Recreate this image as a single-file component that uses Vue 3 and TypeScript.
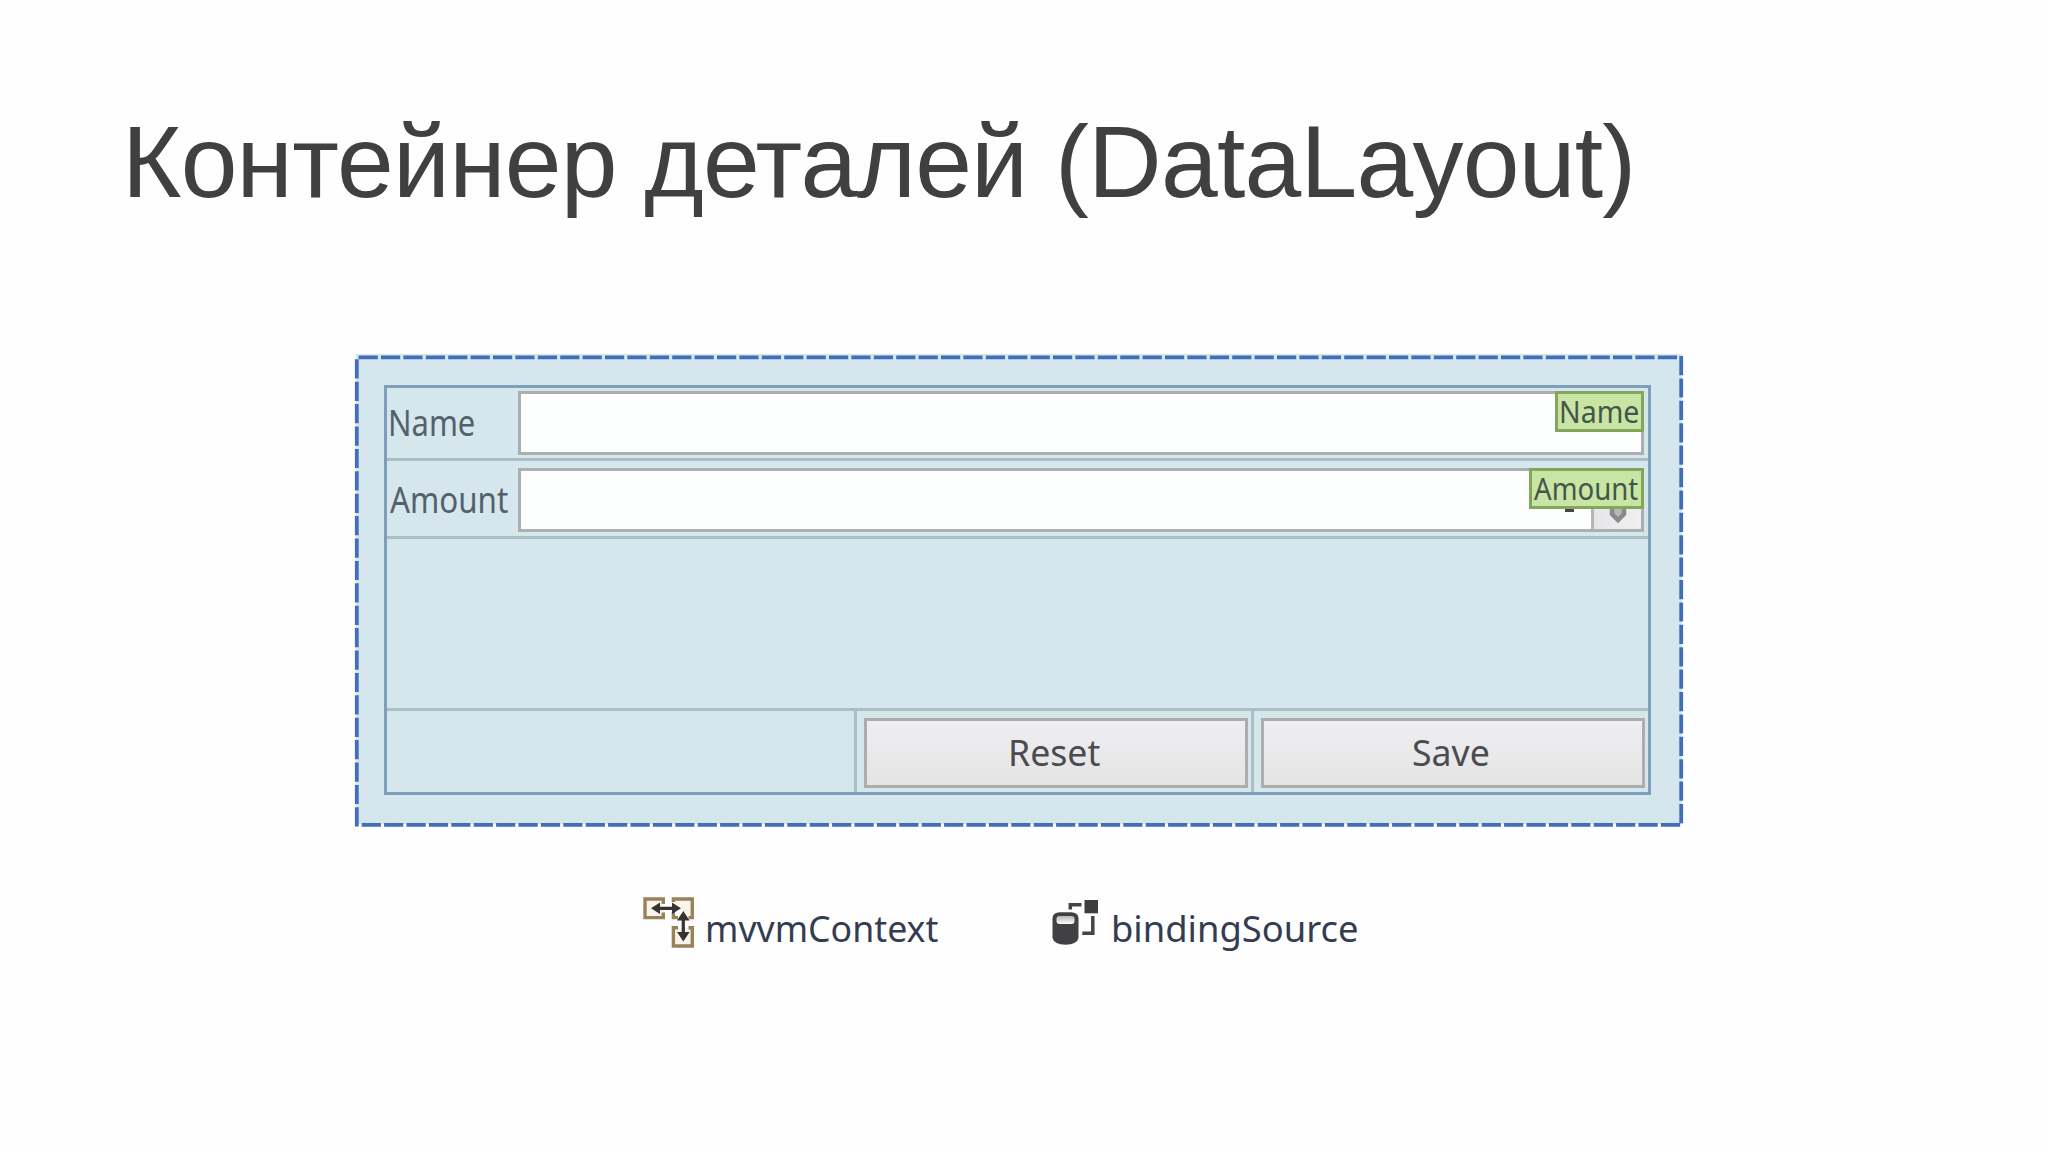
<script setup lang="ts">
const components = [
  { name: 'mvvmContext', icon: 'context' },
  { name: 'bindingSource', icon: 'source' },
]
</script>

<template>
  <main class="slide">
    <h1 class="title">Контейнер деталей (DataLayout)</h1>

    <section class="designer">
      <svg class="marquee" width="1330" height="474" viewBox="354 354 1330 474">
        <g fill="none" stroke="#416dbb" stroke-width="3.8" stroke-dasharray="19.2 3.2">
          <path d="M358.6 357.3H1678" />
          <path d="M356.8 359.3V826.5" />
          <path d="M1681.2 356V826" />
          <path d="M361.7 824.8H1682" />
        </g>
      </svg>
      <div class="layout">
        <div class="row first">
          <span class="caption"><span class="t name">Name</span></span>
          <div class="editor">
            <span class="badge b1"><span class="t bname">Name</span></span>
          </div>
        </div>
        <div class="row second">
          <span class="caption"><span class="t amount">Amount</span></span>
          <div class="editor">
            <span class="zero"></span>
            <span class="spin">
              <svg width="18" height="16" viewBox="0 0 18 16"><path d="M3 0V5L9 11L15 5V0" fill="#b8b8b9" stroke="#8b8b8c" stroke-width="4.5" /></svg>
            </span>
            <span class="badge b2"><span class="t bamount">Amount</span></span>
          </div>
        </div>
        <div class="row empty"></div>
        <div class="row actions">
          <div class="cell blank"></div>
          <div class="cell reset"><button><span class="t treset">Reset</span></button></div>
          <div class="cell save"><button><span class="t tsave">Save</span></button></div>
        </div>
      </div>
    </section>

    <section class="tray">
      <div v-for="c in components" :key="c.name" class="component" :class="c.icon">
        <svg v-if="c.icon === 'context'" width="54" height="54" viewBox="642 896 54 54">
          <g fill="#f8f4ec" stroke="#98815b" stroke-width="3.4">
            <path d="M663.3 904V899H645V917.600H663.300V912.500" />
            <path d="M673.4 902V899H692.300V917.600H688.500M673.400 912V917.600H678" />
            <path d="M678 927.7H673.400V946H692.300V927.700H688.500" />
          </g>
          <path d="M659 908.300H674M683.300 919V933" fill="none" stroke="#353432" stroke-width="3.2" />
          <path d="M651 908.300L660 902.500V914.100ZM681 908.300L672 902.500V914.100ZM683.300 911L677 920.500H689.600ZM683.300 941.500L677 932H689.600Z" fill="#353432" />
        </svg>
        <svg v-else width="50" height="54" viewBox="1050 896 50 54">
          <defs>
            <linearGradient id="lid" x1="0" y1="0" x2="0" y2="1">
              <stop offset="0" stop-color="#b5b5b8" />
              <stop offset="1" stop-color="#ffffff" />
            </linearGradient>
          </defs>
          <path d="M1070.300 909.500V904.700H1081.500M1082.300 933.200H1092.800V916" fill="none" stroke="#444447" stroke-width="3.5" />
          <rect x="1084.500" y="900" width="13.500" height="13.300" fill="#3d3d40" />
          <path d="M1052.500 918Q1053 912.500 1060 912.300H1071Q1078 912.500 1078.500 918V938Q1077 944.500 1065.500 944.700Q1054 944.500 1052.500 938Z" fill="#414144" />
          <rect x="1056.500" y="916" width="18" height="8" rx="3" fill="url(#lid)" />
        </svg>
        <span class="t tray-text">{{ c.name }}</span>
      </div>
    </section>
  </main>
</template>

<style>
body { margin: 0; background: #fefefe; }
</style>

<style scoped>
.slide { box-sizing: border-box; width: 2048px; height: 1152px; padding: 104px 0 0 122px; overflow: hidden; background: #fefefe; }
.title { margin: 0; height: 250px; font: 400 102px/116px "Liberation Sans", Arial, sans-serif; letter-spacing: -0.76px; color: #404040; white-space: nowrap; }
.designer { position: relative; box-sizing: border-box; width: 1326px; height: 470px; margin-left: 234px; padding: 31px 31px 29px 28px; background: #d5e7ed; }
.marquee { position: absolute; left: -2px; top: 0; }
.layout { box-sizing: border-box; width: 1267px; height: 410px; border: 3px solid #7e9fb9; display: flex; flex-direction: column; }
.t { display: inline-block; transform-origin: 0 50%; white-space: nowrap; }
.row { box-sizing: border-box; display: flex; flex-shrink: 0; border-bottom: 3px solid #a9bec5; }
.first { height: 73px; padding: 3px 4px 3px 0; }
.second { height: 78px; padding: 7px 4px 4px 0; }
.empty { height: 172px; }
.actions { flex: 1; border: 0; }
.caption { width: 131px; color: #52616a; font: 36px/64px "Noto Sans", sans-serif; }
.editor { position: relative; box-sizing: border-box; flex: 1; height: 64px; border: 3px solid #abafb2; background: #fdfefe; }
.badge { position: absolute; box-sizing: border-box; right: -3px; top: -3px; height: 41px; border: 3px solid #84a65c; background: #c8e5a4; font: 30px/36px "Noto Sans", sans-serif; color: #44564a; }
.b1 { width: 89px; }
.b2 { width: 115px; }
button { display: block; width: 384px; height: 70px; padding: 0; border: 3px solid #abadaf; border-radius: 0; background: linear-gradient(#eeeef0, #e5e4e5); color: #4b4b50; font: 36px/58px "Noto Sans", sans-serif; text-align: left; }
.cell { box-sizing: border-box; padding: 7px 0 0 7px; }
.blank { width: 467px; }
.reset { width: 397px; border-left: 3px solid #a9bec5; }
.save { flex: 1; border-left: 3px solid #a9bec5; }
.spin { position: absolute; right: 0; top: 0; width: 47px; height: 58px; border-left: 3px solid #b5b7b9; background: linear-gradient(90deg, #e6e6e8, #f0f0f2); }
.spin svg { position: absolute; left: 15px; top: 38px; }
.zero { position: absolute; left: 1044px; top: 37px; width: 9px; height: 4px; background: #4a4248; }
.name { margin-left: 1px; transform: scaleX(.86); }
.amount { margin-left: 3px; transform: scaleX(.87); }
.bname { margin-left: 1px; transform: scaleX(.95); }
.bamount { margin-left: 2px; transform: scaleX(.92); }
.treset { margin-left: 141px; transform: scaleX(.99); }
.tsave { margin-left: 148px; transform: scaleX(.99); }
.tray { display: flex; height: 80px; margin-top: 72px; padding-left: 520px; }
.component { display: flex; }
.context { width: 408px; }
.tray-text { font: 37px/52px "Noto Sans", sans-serif; color: #343c52; margin-left: 9px; margin-top: 6px; transform: scaleX(.965); }
.source .tray-text { margin-left: 11px; transform: scaleX(.983); }
</style>
